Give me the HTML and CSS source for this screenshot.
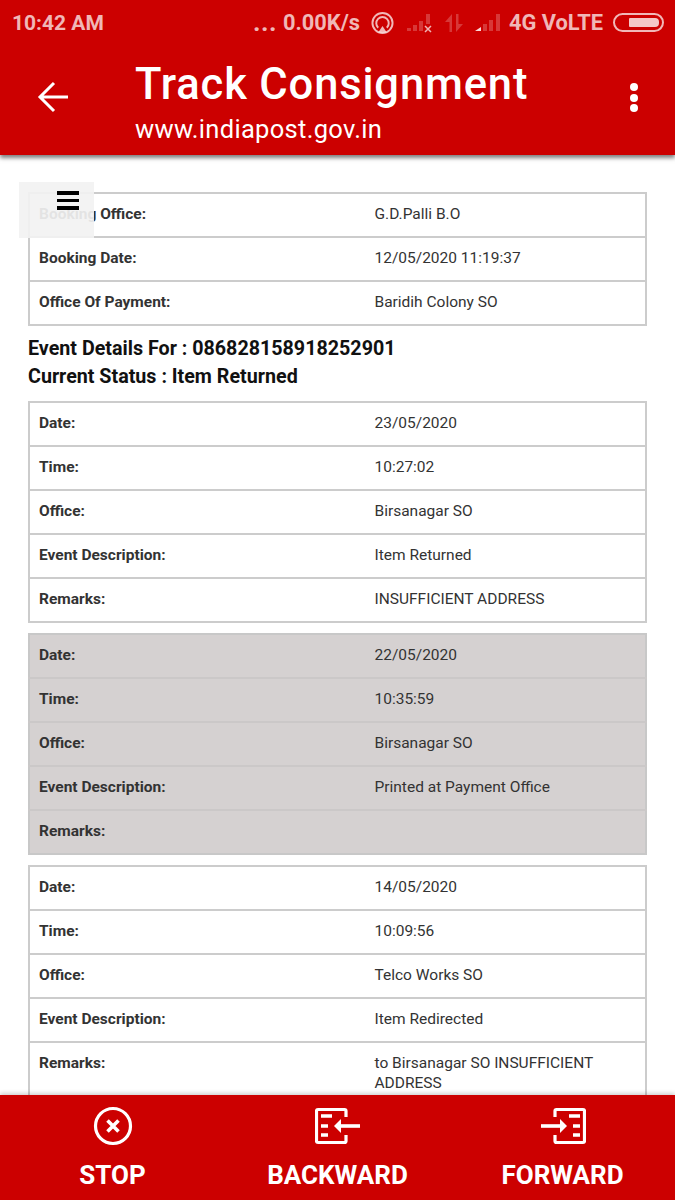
FILE: index.html
```html
<!DOCTYPE html>
<html lang="en">
<head>
<meta charset="utf-8">
<title>Track Consignment</title>
<link rel="stylesheet" href="styles.css">
</head>
<body>
<div class="screen">
  <header class="appbar">
    <div class="status">
      <span class="clock">10:42 AM</span>
      <div class="status-right">
        <span class="dots">...</span>
        <span>0.00K/s</span>
        <svg class="s-hotspot" width="23" height="24" viewBox="0 0 24 24" fill="none" stroke="#fff" stroke-opacity=".72">
          <circle cx="12" cy="12" r="10.500" stroke-width="2"/>
          <path d="M7.500 17a6.500 6.500 0 1 1 9 0" stroke-width="2"/>
          <path d="M12 15l4.500 7h-9z" fill="#fff" fill-opacity=".72" stroke="none"/>
        </svg>
        <svg class="s-sig1" width="29" height="20" viewBox="0 0 29 20" fill="#fff" fill-opacity=".22">
          <rect x="1" y="15" width="4" height="3"/><rect x="7" y="12" width="4" height="6"/><rect x="13" y="8" width="4" height="10"/><rect x="20" y="1" width="4" height="10"/>
          <path d="M19 13l6 6M25 13l-6 6" stroke="#fff" stroke-opacity=".7" stroke-width="1.500" fill="none"/>
        </svg>
        <svg class="s-data" width="20" height="20" viewBox="0 0 20 20" fill="#fff" fill-opacity=".22">
          <path d="M8 1v18h-2.500v-10h-4.500z"/><path d="M12 19v-18h2.500v10h4.500z"/>
        </svg>
        <svg class="s-sig2" width="28" height="20" viewBox="0 0 28 20" fill="#fff" fill-opacity=".22">
          <path d="M1 18l6-4v4z" fill-opacity=".85"/><rect x="9" y="11" width="4" height="7"/><rect x="15" y="7" width="4" height="11"/><rect x="22" y="1" width="4" height="17"/>
        </svg>
        <span class="net">4G VoLTE</span>
        <span class="battery"><span class="battery-fill"></span></span>
      </div>
    </div>
    <div class="toolbar">
      <svg class="back" width="32" height="32" viewBox="0 0 32 32" fill="none" stroke="#fff" stroke-width="3">
        <path d="M31 16H3M17 2L3 16l14 14"/>
      </svg>
      <div class="titles">
        <div class="title">Track Consignment</div>
        <div class="subtitle">www.indiapost.gov.in</div>
      </div>
      <div class="kebab"><i></i><i></i><i></i></div>
    </div>
  </header>

  <main class="content">
    <button class="menu-btn" type="button" aria-label="Menu"><i></i><i></i><i></i></button>

    <table class="info">
      <tr><th>Booking Office:</th><td>G.D.Palli B.O</td></tr>
      <tr><th>Booking Date:</th><td>12/05/2020 11:19:37</td></tr>
      <tr><th>Office Of Payment:</th><td>Baridih Colony SO</td></tr>
    </table>

    <div class="event-head">
      <div>Event Details For : 086828158918252901</div>
      <div>Current Status : Item Returned</div>
    </div>

    <table class="info">
      <tr><th>Date:</th><td>23/05/2020</td></tr>
      <tr><th>Time:</th><td>10:27:02</td></tr>
      <tr><th>Office:</th><td>Birsanagar SO</td></tr>
      <tr><th>Event Description:</th><td>Item Returned</td></tr>
      <tr><th>Remarks:</th><td>INSUFFICIENT ADDRESS</td></tr>
    </table>

    <table class="info shaded">
      <tr><th>Date:</th><td>22/05/2020</td></tr>
      <tr><th>Time:</th><td>10:35:59</td></tr>
      <tr><th>Office:</th><td>Birsanagar SO</td></tr>
      <tr><th>Event Description:</th><td>Printed at Payment Office</td></tr>
      <tr><th>Remarks:</th><td></td></tr>
    </table>

    <table class="info">
      <tr><th>Date:</th><td>14/05/2020</td></tr>
      <tr><th>Time:</th><td>10:09:56</td></tr>
      <tr><th>Office:</th><td>Telco Works SO</td></tr>
      <tr><th>Event Description:</th><td>Item Redirected</td></tr>
      <tr><th>Remarks:</th><td>to Birsanagar SO INSUFFICIENT ADDRESS</td></tr>
    </table>
  </main>

  <nav class="bottombar">
    <div class="action">
      <svg width="40" height="40" viewBox="0 0 40 40" fill="none" stroke="#fff" stroke-width="3.200">
        <ellipse cx="20" cy="20" rx="17.500" ry="17.500"/>
        <path d="M14.500 14.500l11 11M25.500 14.500l-11 11" stroke-width="3.600"/>
      </svg>
      <span>STOP</span>
    </div>
    <div class="action">
      <svg width="46" height="36" viewBox="0 0 46 36" fill="none" stroke="#fff" stroke-width="3.200">
        <path d="M31 9V3q0-1.500-1.500-1.500H3Q1.500 1.500 1.500 3v30q0 1.500 1.500 1.500h26.500q1.500 0 1.500-1.500v-6"/>
        <path d="M6 8h11M6 18h7M6 27h7" stroke-width="3.600"/>
        <path d="M21 18h24" stroke-width="3.600"/>
        <path d="M26 11l-7 7 7 7z" fill="#fff" stroke="none"/>
      </svg>
      <span>BACKWARD</span>
    </div>
    <div class="action">
      <svg width="46" height="36" viewBox="0 0 46 36" fill="none" stroke="#fff" stroke-width="3.200">
        <path d="M15 9V3q0-1.500 1.500-1.500H43q1.500 0 1.500 1.500v30q0 1.500-1.500 1.500H16.500q-1.500 0-1.500-1.500v-6"/>
        <path d="M29 8h11M33 18h7M33 27h7" stroke-width="3.600"/>
        <path d="M1 18h24" stroke-width="3.600"/>
        <path d="M20 11l7 7-7 7z" fill="#fff" stroke="none"/>
      </svg>
      <span>FORWARD</span>
    </div>
  </nav>
</div>
</body>
</html>
```
FILE: styles.css
```css
* { box-sizing: border-box; }
html, body { margin: 0; padding: 0; }
body { font-family: Roboto, "Liberation Sans", sans-serif; background: #fff; }

.screen {
  width: 675px;
  height: 1200px;
  display: flex;
  flex-direction: column;
  overflow: hidden;
}

.appbar {
  height: 155px;
  flex: none;
  background: #cc0000;
  color: #fff;
  box-shadow: 0 3px 4px rgba(0, 0, 0, .5);
  position: relative;
  z-index: 2;
}

.status {
  height: 45px;
  padding: 0 11px 0 12px;
  display: flex;
  align-items: center;
  justify-content: space-between;
  font-size: 21.800px;
  font-weight: 700;
  color: rgba(255, 255, 255, .72);
}
.clock { font-size: 21px; }
.status-right { display: flex; align-items: center; }
.dots { font-size: 26px; font-weight: 700; letter-spacing: .5px; margin-right: 6px; position: relative; top: -1px; }
.s-hotspot { margin-left: 11px; }
.s-sig1 { margin-left: 12px; }
.s-data { margin-left: 9px; }
.s-sig2 { margin-left: 10px; }
.net { margin-left: 7px; }
.battery {
  width: 51px;
  height: 19px;
  margin-left: 10px;
  border: 2px solid rgba(255, 255, 255, .72);
  border-radius: 10px;
  padding: 3px 3px 3px 14px;
  display: flex;
}
.battery-fill { flex: 1; background: rgba(255, 255, 255, .78); border-radius: 1px 4px 4px 1px; }

.toolbar {
  height: 110px;
  padding: 1px 37px 0 37px;
  display: flex;
  align-items: flex-start;
}
.back { margin-top: 35px; flex: none; }
.titles { margin-left: 66px; flex: 1; }
.title { font-size: 43.500px; font-weight: 500; line-height: 50px; margin-top: 14px; letter-spacing: .85px; }
.subtitle { font-size: 25.500px; line-height: 30px; margin-top: 4px; letter-spacing: .3px; }
.kebab { margin-top: 37px; display: flex; flex-direction: column; gap: 2.500px; }
.kebab i { width: 8px; height: 8px; border-radius: 50%; background: #fff; display: block; }

.content {
  flex: 1;
  min-height: 0;
  overflow: hidden;
  padding: 37px 28px 0;
  position: relative;
}

.menu-btn {
  position: absolute;
  left: 19px;
  top: 27px;
  width: 75px;
  height: 56px;
  border: 0;
  padding: 9px 15px 0 0;
  background: rgba(242, 242, 242, .92);
  display: flex;
  flex-direction: column;
  align-items: flex-end;
  gap: 4px;
}
.menu-btn i { width: 22px; height: 3.500px; background: #000; display: block; }

.info {
  width: 619px;
  border-collapse: collapse;
  table-layout: fixed;
  border: 2px solid #cccccc;
  margin-bottom: 10px;
  font-size: 15.500px;
  color: #333;
}
.info tr { border-top: 2px solid #cccccc; }
.info tr:first-child { border-top: 0; }
.info th, .info td {
  padding: 10px;
  line-height: 20px;
  height: 44px;
  text-align: left;
  vertical-align: top;
}
.info th { width: 336px; font-weight: 700; padding-left: 9px; }
.info td { padding-left: 9.500px; padding-right: 30px; font-weight: 400; }

.shaded { background: #d5d1d1; border-color: #c8c8c8; }
.shaded tr { border-top-color: #cbc8c8; }

.event-head {
  margin: -1px 0 10px;
  font-size: 19.700px;
  font-weight: 700;
  line-height: 28px;
  color: #111;
}

.bottombar {
  height: 105px;
  flex: none;
  background: #cc0000;
  color: #fff;
  box-shadow: 0 -2px 4px rgba(0, 0, 0, .18);
  position: relative;
  z-index: 2;
  display: grid;
  grid-template-columns: 225px 225px 225px;
}
.action {
  display: flex;
  flex-direction: column;
  align-items: center;
  font-size: 26px;
  font-weight: 700;
}
.action svg { margin-top: 11px; height: 40px; }
.action span { margin-top: 14px; line-height: 30px; }
```
